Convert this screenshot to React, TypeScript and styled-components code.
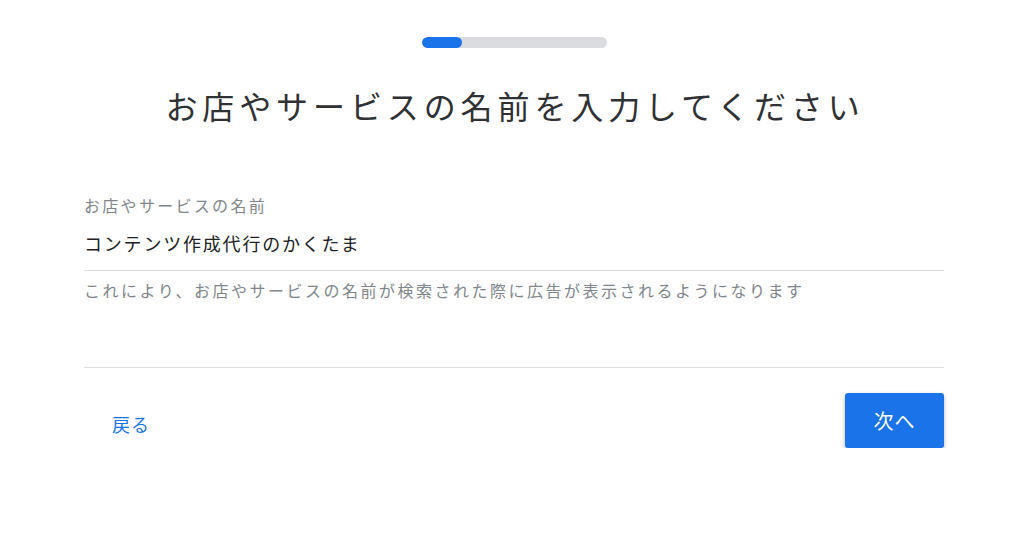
import React from 'react'
import styled, { createGlobalStyle } from 'styled-components'

const GlobalStyle = createGlobalStyle`
  body {
    margin: 0;
    background: #ffffff;
    font-family: "Noto Sans CJK JP", "Noto Sans", sans-serif;
  }
`

const Page = styled.div`
  width: 860px;
  margin: 0 80px 0 84px;
  padding-top: 37px;
  display: flex;
  flex-direction: column;
`

const Progress = styled.div`
  align-self: center;
  width: 185px;
  height: 11px;
  border-radius: 6px;
  background: #dadce0;
  overflow: hidden;
`

const ProgressFill = styled.div`
  height: 100%;
  border-radius: 6px;
  background: #1a73e8;
`

const Title = styled.h1`
  margin: 35px 0 0;
  padding-left: 2px;
  text-align: center;
  font-size: 32px;
  font-weight: 400;
  line-height: 44px;
  letter-spacing: 4.9px;
  color: #303134;
`

const Field = styled.div`
  margin-top: 68px;
  display: flex;
  flex-direction: column;
`

const Label = styled.label`
  font-size: 16px;
  line-height: 20px;
  letter-spacing: 2.3px;
  color: #80868b;
`

const Value = styled.div`
  margin-top: 16px;
  padding-bottom: 15px;
  font-size: 18px;
  line-height: 24px;
  letter-spacing: 1.8px;
  color: #202124;
  border-bottom: 1px solid #dadce0;
`

const Helper = styled.div`
  margin-top: 8px;
  font-size: 16px;
  line-height: 22px;
  letter-spacing: 2.5px;
  color: #80868b;
`

const Actions = styled.div`
  margin-top: 66px;
  border-top: 1px solid #e0e0e0;
  padding-top: 25px;
  display: flex;
  justify-content: space-between;
  align-items: center;
`

const TextButton = styled.button`
  border: none;
  background: none;
  padding: 7px 0 0 28px;
  font-family: inherit;
  font-size: 18px;
  letter-spacing: 1px;
  color: #1a73e8;
  cursor: pointer;
`

const PrimaryButton = styled.button`
  width: 99px;
  height: 55px;
  border: none;
  border-radius: 3px;
  background: #1a73e8;
  color: #ffffff;
  font-family: inherit;
  font-size: 20px;
  letter-spacing: 1px;
  box-shadow: 0 2px 4px rgba(0, 0, 0, 0.3);
  cursor: pointer;
`

const App: React.FC = () => {
  const step = 0.22
  return (
    <>
      <GlobalStyle />
      <Page>
        <Progress>
          <ProgressFill style={{ width: `${step * 100}%` }} />
        </Progress>
        <Title>お店やサービスの名前を入力してください</Title>
        <Field>
          <Label>お店やサービスの名前</Label>
          <Value>コンテンツ作成代行のかくたま</Value>
          <Helper>これにより、お店やサービスの名前が検索された際に広告が表示されるようになります</Helper>
        </Field>
        <Actions>
          <TextButton>戻る</TextButton>
          <PrimaryButton>次へ</PrimaryButton>
        </Actions>
      </Page>
    </>
  )
}

export default App
